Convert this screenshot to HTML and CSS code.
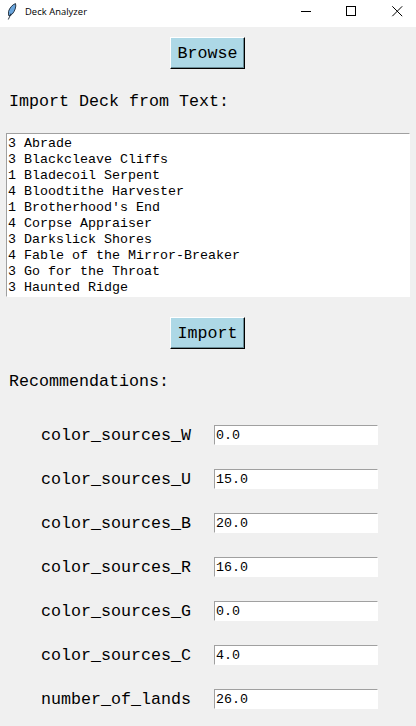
FILE: index.html
```html
<!DOCTYPE html>
<html lang="en">
<head>
<meta charset="utf-8">
<title>Deck Analyzer</title>
<link rel="stylesheet" href="styles.css">
</head>
<body>
<header class="titlebar">
  <svg class="feather" width="10" height="17" viewBox="0 0 10 17">
    <path d="M8.500.6C5.500 1.500 2.500 5 1.500 8.500L1.600 12.500 3.300 12.700C6 11 8.500 7 8.800 3Z" fill="#69a5dd" stroke="#1c2733" stroke-width=".9"/>
    <path d="M4 10.500 1.300 16.500" fill="none" stroke="#1c2733" stroke-width=".9"/>
  </svg>
  <span class="title">Deck Analyzer</span>
  <svg class="controls" width="103" height="11" viewBox="0 0 103 11" fill="none" stroke="#000">
    <path d="M0 5.500H10M45.500.5H54.500V9.500H45.500Z" shape-rendering="crispEdges"/>
    <path d="M91.300.3 101.200 10.200M101.200.3 91.300 10.200"/>
  </svg>
</header>
<main>
  <button class="btn">Browse</button>
  <h2 class="heading">Import Deck from Text:</h2>
  <div class="sunken deck">3 Abrade
3 Blackcleave Cliffs
1 Bladecoil Serpent
4 Bloodtithe Harvester
1 Brotherhood's End
4 Corpse Appraiser
3 Darkslick Shores
4 Fable of the Mirror-Breaker
3 Go for the Throat
3 Haunted Ridge</div>
  <button class="btn">Import</button>
  <h2 class="heading">Recommendations:</h2>
  <div class="results">
    <span class="name">color_sources_W</span><div class="sunken value">0.0</div>
    <span class="name">color_sources_U</span><div class="sunken value">15.0</div>
    <span class="name">color_sources_B</span><div class="sunken value">20.0</div>
    <span class="name">color_sources_R</span><div class="sunken value">16.0</div>
    <span class="name">color_sources_G</span><div class="sunken value">0.0</div>
    <span class="name">color_sources_C</span><div class="sunken value">4.0</div>
    <span class="name">number_of_lands</span><div class="sunken value">26.0</div>
  </div>
</main>
</body>
</html>
```
FILE: styles.css
```css
* { box-sizing: border-box; }
body {
  margin: 0;
  height: 726px;
  overflow: hidden;
  background: #f0f0f0;
  color: #000;
  font-family: "Liberation Mono", monospace;
}
.titlebar {
  display: flex;
  align-items: flex-start;
  height: 27px;
  padding: 0 12px 0 7px;
  background: #fff;
}
.feather { margin-top: 3px; }
.title {
  margin-left: 8px;
  font: 9.4px/24px "Open Sans", "Noto Sans", sans-serif;
  letter-spacing: 0.05px;
}
.controls { margin: 6px 0 0 auto; }
main {
  display: flex;
  flex-direction: column;
  padding: 10px 6px 0;
}
.btn {
  align-self: center;
  width: 75px;
  height: 32px;
  margin: 0 1px 0 0;
  padding: 2px 0 0;
  border: 1px solid;
  border-color: #fff #000 #000 #fff;
  box-shadow: inset -1px -1px #698c96;
  background: #add8e6;
  color: #000;
  font: 16.67px/28px "Liberation Mono", monospace;
}
.heading {
  height: 64px;
  margin: 0;
  padding-left: 3px;
  font-size: 16.67px;
  font-weight: normal;
  line-height: 66px;
}
.sunken {
  border: 1px solid #fff;
  border-top-color: #a0a0a0;
  border-left-color: #a0a0a0;
  background: #fff;
  font-size: 13.33px;
  white-space: pre;
}
.deck {
  width: 404px;
  height: 164px;
  margin-bottom: 20px;
  padding: 2px 1px 0;
  line-height: 16px;
}
.results {
  display: grid;
  grid-template-columns: 173px 164px;
  grid-auto-rows: 44px;
  align-items: center;
  padding-left: 35px;
}
.name {
  padding-top: 2px;
  font-size: 16.67px;
  line-height: 20px;
}
.value {
  height: 20px;
  padding: 2px 1px 0;
  line-height: 16px;
}
```
